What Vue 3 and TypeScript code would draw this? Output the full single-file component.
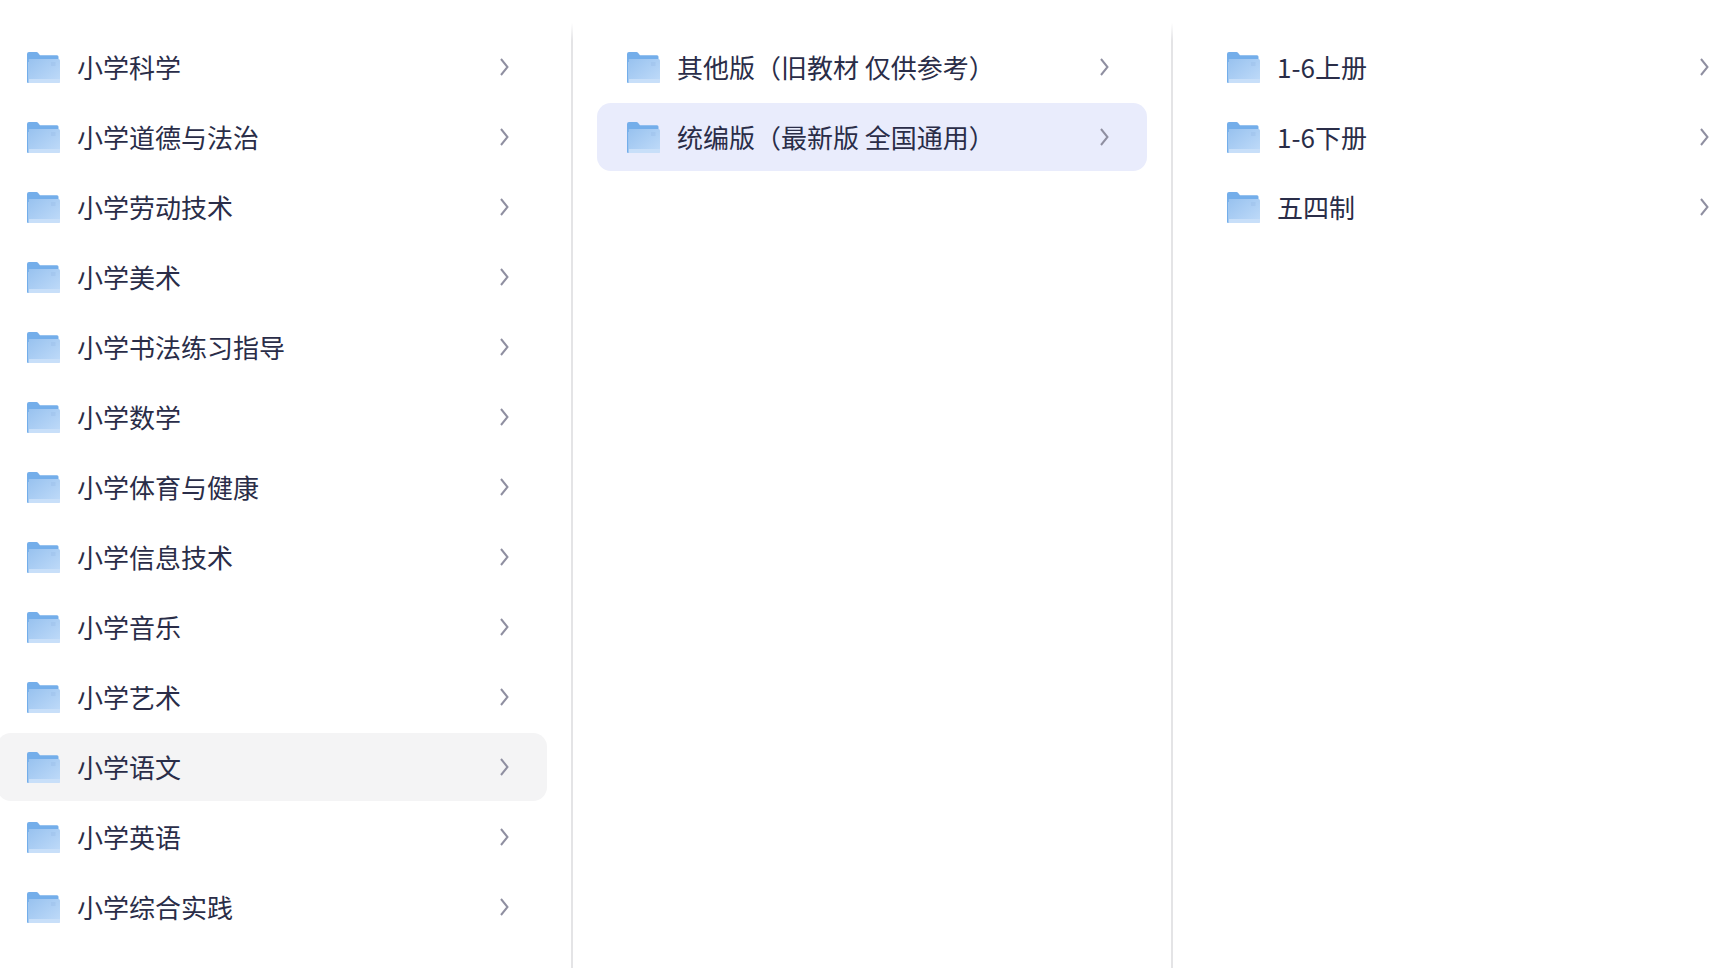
<script setup lang="ts">
interface Item { name: string; state?: 'hover' | 'active' }
const columns: Item[][] = [
  ['小学科学','小学道德与法治','小学劳动技术','小学美术','小学书法练习指导','小学数学','小学体育与健康','小学信息技术','小学音乐','小学艺术','小学语文','小学英语','小学综合实践']
    .map((name) => ({ name, state: name === '小学语文' ? 'hover' as const : undefined })),
  [{ name: '其他版（旧教材 仅供参考）' }, { name: '统编版（最新版 全国通用）', state: 'active' }],
  [{ name: '1-6上册' }, { name: '1-6下册' }, { name: '五四制' }],
]
</script>

<template>
  <div class="browser">
    <section v-for="(col, c) in columns" :key="c" class="column">
      <ul class="list">
        <li v-for="(item, i) in col" :key="item.name" class="row" :class="item.state">
          <svg class="folder" viewBox="0 0 33 31" aria-hidden="true">
            <defs>
              <linearGradient :id="`folder-${c}-${i}`" x1="0" y1="0" x2="1" y2="1">
                <stop offset="0" stop-color="#98c2ef" />
                <stop offset="1" stop-color="#c0dbf9" />
              </linearGradient>
            </defs>
            <path d="M0 2a2 2 0 0 1 2-2h7.500a2 2 0 0 1 1.500.7L13 3.200h17a1.500 1.500 0 0 1 1.500 1.500V10H0z" fill="#74aeea" />
            <path d="M1.500 7H31.500a1.500 1.500 0 0 1 1.500 1.500V29.500a1.500 1.500 0 0 1-1.500 1.500H1.500z" :fill="`url(#folder-${c}-${i})`" />
            <path d="M1.500 27H33v2.500a1.500 1.500 0 0 1-1.500 1.500H1.500z" fill="#c8dff9" />
            <path d="M0 6h1.500v25H1a1 1 0 0 1-1-1z" fill="#74aeea" />
            <path d="M24 11h4.500M24 13h4.500" stroke="#9dc0ea" stroke-width="1" fill="none" />
          </svg>
          <span class="label">{{ item.name }}</span>
          <svg class="chevron" viewBox="0 0 9 18" aria-hidden="true">
            <path d="M1 1l6.500 8L1 17" fill="none" stroke="#8f8fa1" stroke-width="2" />
          </svg>
        </li>
      </ul>
    </section>
  </div>
</template>

<style scoped>
.browser {
  display: flex;
  width: 1800px;
  height: 968px;
  margin-left: -27px;
  padding-top: 20px;
  box-sizing: border-box;
  font-family: "Noto Sans CJK SC", "Noto Sans", sans-serif;
  color: #2a2d48;
}
.column {
  flex: 0 0 600px;
  box-sizing: border-box;
  padding: 13px 24px 0;
  border-right: 2px solid #e4e4e6;
  border-image: linear-gradient(to bottom, #ffffff 4px, #e4e4e6 22px) 1;
}
.column:last-child {
  border-right: 0;
}
.list {
  list-style: none;
  margin: 0;
  padding: 0;
  display: flex;
  flex-direction: column;
  gap: 2px;
}
.row {
  display: flex;
  align-items: center;
  width: 550px;
  height: 68px;
  box-sizing: border-box;
  padding: 0 38px 0 30px;
  border-radius: 14px;
}
.row.hover {
  background: #f4f4f5;
}
.row.active {
  background: #e9ecfc;
}
.folder {
  flex: none;
  width: 33px;
  height: 31px;
}
.label {
  flex: 1;
  margin-left: 17px;
  font-size: 26px;
  line-height: 36px;
  white-space: nowrap;
}
.chevron {
  flex: none;
  width: 9px;
  height: 18px;
}
</style>

<style>
html, body {
  margin: 0;
  overflow: hidden;
  background: #fff;
}
</style>
